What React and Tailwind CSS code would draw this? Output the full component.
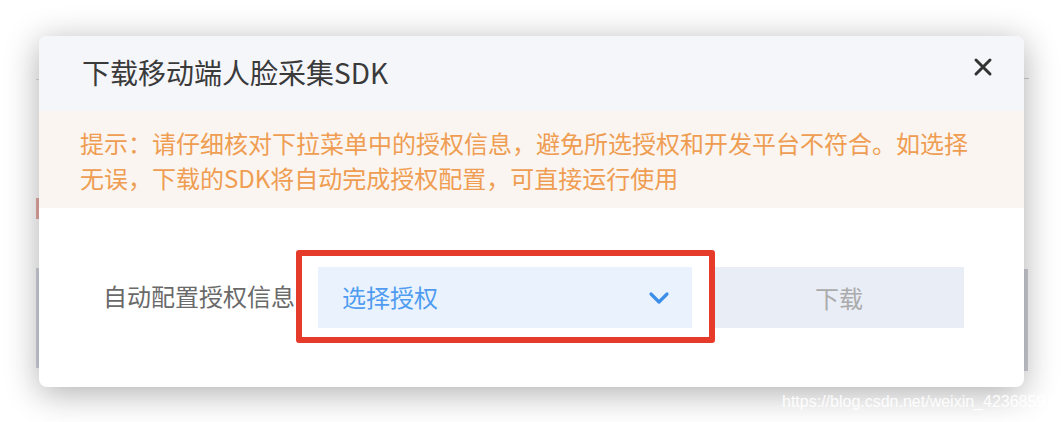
import React from "react";

const CJK = { fontFamily: '"Noto Sans CJK SC", "Noto Sans", sans-serif' };

export default function App() {
  return (
    <div className="relative w-[1064px] h-[422px] overflow-hidden bg-white" style={CJK}>
      {/* page content peeking behind the modal */}
      <div className="absolute left-[36px] top-[79px] w-[4px] h-[1px] bg-[#dddddd]" />
      <div className="absolute left-[36px] top-[198px] w-[4px] h-[21px] bg-[#e6aaa5]" />
      <div className="absolute left-[36px] top-[268px] w-[4px] h-[100px] bg-[#d2d4de]" />
      <div className="absolute left-[1024px] top-[78px] w-[5px] h-[1px] bg-[#d0d0d0]" />
      <div className="absolute left-[1024px] top-[269px] w-[4px] h-[102px] bg-[#d0d1d9]" />

      <div className="pt-[36px] pl-[39px]">
        <div className="relative w-[985px] h-[351px] rounded-[8px] bg-white overflow-hidden shadow-[0_6px_34px_rgba(0,0,0,0.32)] flex flex-col">
          {/* header */}
          <div className="h-[75px] shrink-0 bg-[#f5f6fa] flex items-center justify-between pl-[43px] pr-[31px]">
            <span className="text-[28px] leading-none text-[#3a3a3a] pb-[4px]">下载移动端人脸采集SDK</span>
            <svg width="20" height="20" viewBox="0 0 20 20" className="mb-[13px]">
              <path d="M3 3 L17 17 M17 3 L3 17" stroke="#333" strokeWidth="3" strokeLinecap="round" fill="none" />
            </svg>
          </div>
          {/* warning */}
          <div className="h-[97px] shrink-0 bg-[#faf5f0] pl-[41px] pr-[44px] pt-[14px] text-[24px] leading-[35px] text-[#ef9d52]">
            提示：请仔细核对下拉菜单中的授权信息，避免所选授权和开发平台不符合。如选择无误，下载的SDK将自动完成授权配置，可直接运行使用
          </div>
          {/* body */}
          <div className="flex-1 flex items-center pl-[64px]">
            <span className="text-[24px] leading-none text-[#6a6a6a] w-[215px] shrink-0 pb-[3px]">自动配置授权信息</span>
            <div className="relative">
              <div className="w-[374px] h-[61px] bg-[#eaf3fd] flex items-center justify-between pl-[24px] pr-[22px]">
                <span className="text-[24px] leading-none text-[#4f9cf0] pb-[2px]">选择授权</span>
                <svg width="22" height="14" viewBox="0 0 22 14">
                  <path d="M3 3 L11 11 L19 3" stroke="#3d8ee8" strokeWidth="3.2" strokeLinecap="round" strokeLinejoin="round" fill="none" />
                </svg>
              </div>
              <div className="absolute left-[-22px] right-[-23px] top-[-17px] bottom-[-15px] border-[6px] border-[#e63a2b] rounded-[3px]" />
            </div>
            <div className="ml-[22px] w-[250px] h-[61px] bg-[#e9edf6] flex items-center justify-center">
              <span className="text-[24px] leading-none text-[#ababab]">下载</span>
            </div>
          </div>
        </div>
      </div>

      <div
        className="absolute left-[782px] top-[394px] text-[16px] leading-none text-white/90 whitespace-nowrap"
        style={{ fontFamily: '"Liberation Sans", Arial, sans-serif' }}
      >
        https://blog.csdn.net/weixin_42368597
      </div>
    </div>
  );
}
